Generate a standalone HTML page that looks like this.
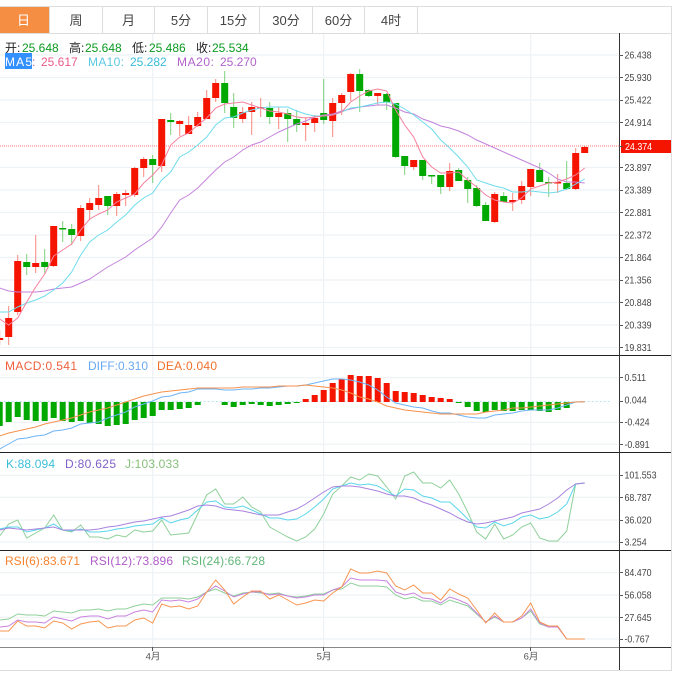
<!DOCTYPE html>
<html><head><meta charset="utf-8">
<style>
html,body{margin:0;padding:0;background:#fff;width:677px;height:681px;overflow:hidden}
svg{display:block;position:absolute;left:0;top:0;filter:blur(.25px)}
text{font-family:"Liberation Sans","Noto Sans CJK SC",sans-serif}
.l polyline,.c path{vector-effect:non-scaling-stroke;fill:none}
.t text{font-size:13px;fill:#444;text-anchor:middle}
.y text{font-size:10.2px;fill:#444}
.g{font-size:12px}
</style></head><body>
<svg width="677" height="681" viewBox="0 0 677 681">
<rect width="677" height="681" fill="#fff"/>
<!-- grid -->
<g stroke="#eef2f6" stroke-width="1.2" fill="none">
<path d="M0 55H619M0 77.5H619M0 100H619M0 122.5H619M0 167.5H619M0 190H619M0 212.5H619M0 235H619M0 257.5H619M0 280H619M0 302.5H619M0 325H619M0 347.5H619"/>
<path d="M0 377.7H619M0 422.3H619M0 444.3H619M0 475.3H619M0 497.3H619M0 520H619M0 542H619M0 572.7H619M0 595H619M0 617.3H619M0 639H619"/>
<path d="M152.7 33V647M323.7 33V647M530.7 33V647"/>
</g>
<!-- tabs -->
<rect x="0" y="7" width="49" height="26" fill="#f58d42"/>
<g stroke="#ddd" stroke-width="1" fill="none">
<path d="M0 6.5H671.5V670.5H0M0 33.5H671.5"/>
<path d="M49.5 7V33M102.5 7V33M154.5 7V33M207.5 7V33M259.5 7V33M312.5 7V33M364.5 7V33M417.5 7V33"/>
</g>
<g class="t">
<text x="23.5" y="25" style="fill:#fff">日</text>
<text x="76" y="25">周</text>
<text x="128.5" y="25">月</text>
<text x="181" y="25">5分</text>
<text x="233.5" y="25">15分</text>
<text x="286" y="25">30分</text>
<text x="338.5" y="25">60分</text>
<text x="391" y="25">4时</text>
</g>
<!-- price dotted line -->
<path d="M0 146H619" stroke="#f77" stroke-width="1" stroke-dasharray="1 1" fill="none"/>
<!-- candles -->
<g class="c" transform="translate(8.7 0) scale(9 1)">
<path stroke="#f51400" stroke-opacity=".5" stroke-width="1" d="M-1 330V345M0 306V345M1 255V315M3 235V273M5 226V267M8 205V241M9 198V220M10 185V210M12 192V216M13 190V206M14 167V197M15 157V177M17 119V172M19 120V136M20 116V134M21 112V127M22 90V119M23 79V102M26 107V123M27 102V135M28 98V117M30 107V129M33 117V141M34 115V132M36 98V137M37 93V115M38 73V101M41 93V105M45 160V170M49 163V191M54 192V223M56 193V211M57 181V204M58 169V196M61 174V193M63 148V190M64 146V153"/>
<path stroke="#00a800" stroke-opacity=".5" stroke-width="1" d="M2 254V275M4 249V273M6 221V242M7 224V245M11 196V215M16 155V183M18 113V135M24 71V113M25 93V128M29 102V124M31 109V142M32 110V132M35 79V124M39 69V112M40 89V97M42 93V110M43 103V158M44 156V175M46 160V180M47 175V184M48 175V194M50 168V181M51 177V203M52 185V207M53 202V221M55 192V202M59 163V182M60 177V197M62 161V190"/>
<path stroke="#f51400" stroke-width="7" d="M-1 338V340M0 318V337M1 261V312M3 263V267M5 226V266M8 208V236M9 203V210M10 198V205M12 194V206M13 193V195M14 168V195M15 159V168M17 119V166M19 121V124M20 125V134M21 117V126M22 98V119M23 83V98M26 112V119M27 107V112M28 107V108.5M30 113V117M33 123V125M34 118V123M36 103V121M37 95V103M38 74V92M41 93V96M45 160V167M49 171V187M54 194V222M56 200V202M57 186V200M58 169V187M61 182V183.5M63 153V189M64 147V153"/>
<path stroke="#00a800" stroke-width="7" d="M2 262V267M4 262V267M6 228V229.5M7 229V235M11 196V206M16 159V165M18 120V122M24 83V103M25 107V118M29 108V117M31 113V119M32 119V125M35 113V120M39 74V91M40 90V96M42 94V102M43 103V157M44 156V166M46 160V176M47 175V176.5M48 175V187M50 170V181M51 180V189M52 188V206M53 205V221M55 196V202M59 170V182M60 182V183.5M62 183V189"/>
</g>
<!-- MACD bars -->
<g class="c" transform="translate(8.7 0) scale(9 1)">
<path stroke="#bfe3ee" stroke-width="1" stroke-dasharray="2 2" d="M-1 401.5H67"/>
<path stroke="#00a800" stroke-width="6" d="M-1 402V426M0 402V422M1 402V417M2 402V420M3 402V421M4 402V421M5 402V418M6 402V421M7 402V422M8 402V421M9 402V423M10 402V424M11 402V426M12 402V425M13 402V424M14 402V420M15 402V418M16 402V416M17 402V410M18 402V410M19 402V409M20 402V408M21 402V405M24 402V405M25 402V407M26 402V405M27 402V404M28 402V405M29 402V406M30 402V405M31 402V404M32 402V403M50 402V403M51 402V407M52 402V411M53 402V412M54 402V410M55 402V411M56 402V411M57 402V410M58 402V410M59 402V411M60 402V412M61 402V410M62 402V408"/>
<path stroke="#f51400" stroke-width="6" d="M33 399V402M34 395V402M35 390V402M36 383V402M37 379V402M38 375V402M39 376V402M40 376V402M41 378V402M42 383V402M43 391V402M44 392V402M45 393V402M46 395V402M47 397V402M48 398V402M49 399V402"/>
</g>
<!-- lines -->
<g class="l" transform="translate(8.7 0) scale(9 1)" stroke-width="1">
<polyline stroke="#c483dc" points="-1,288 0,291 1,292 2,292 3,292 4,291 5,289 6,288 7,287 8,283 9,279 10,273 11,267 12,262 13,257 14,250 15,244 16,238 17,227 18,213 19,200 20,195 21,188 22,179 23,170 24,162 25,157 26,150 27,145 28,142 29,137 30,132 31,128 32,124 33,121 34,117 35,115 36,114 37,111 38,109 39,107 40,106 41,105 42,105 43,108 44,112 45,114 46,119 47,122 48,126 49,128 50,131 51,135 52,140 53,144 54,148 55,152 56,156 57,160 58,164 59,168 60,173 61,179 62,182 63,182 64,183"/>
<polyline stroke="#6fdcec" points="-1,312 0,312 1,307 2,303 3,300 4,296 5,290 6,283 7,272 8,255 9,242 10,235 11,230 12,222 13,215 14,205 15,198 16,193 17,180 18,172 19,157 20,152 21,145 22,137 23,125 24,118 25,117 26,113 27,110 28,108 29,107 30,107 31,107 32,111 33,114 34,116 35,116 36,115 37,112 38,108 39,107 40,105 41,103 42,102 43,104 44,109 45,115 46,122 47,129 48,140 49,148 50,157 51,167 52,180 53,183 54,186 55,188 56,192 57,192 58,191 59,192 60,193 61,192 62,189 63,184 64,179"/>
<polyline stroke="#f5819f" points="-1,319 0,325 1,318 2,302 3,287 4,274 5,256 6,250 7,244 8,230 9,219 10,214 11,210 12,202 13,198 14,194 15,183 16,175 17,165 18,145 19,137 20,133 21,125 22,118 23,108 24,104 25,103 26,102 27,105 28,108 29,111 30,112 31,114 32,117 33,118 34,117 35,116 36,115 37,112 38,102 39,96 40,91 41,89 42,91 43,110 44,125 45,137 46,157 47,167 48,173 49,173 50,172 51,180 52,187 53,195 54,200 55,202 56,203 57,198 58,189 59,186 60,183 61,182 62,179 63,175 64,168"/>
<polyline stroke="#6eb4f5" points="-1,449 0,444 1,439 2,438 3,436 4,435 5,431 6,430 7,428 8,424 9,423 10,422 11,418 12,415 13,412 14,407 15,404 16,401 17,397 18,396 19,393 20,392 21,389 22,389 23,389 24,390 25,390 26,389 27,389 28,388 29,388 30,387 31,386 32,386 33,385 34,383 35,381 36,379 37,379 38,380 39,382 40,385 41,390 42,397 43,403 44,405 45,407 46,408 47,411 48,413 49,413 50,415 51,417 52,418 53,418 54,415 55,414 56,413 57,411 58,410 59,410 60,410 61,408 62,405 63,402 64,401.7"/>
<polyline stroke="#f5914c" points="-1,436 0,433 1,431 2,429 3,427 4,424 5,422 6,420 7,418 8,415 9,412 10,410 11,408 12,405 13,402 14,399 15,396 16,394 17,392 18,391 19,390 20,389 21,388 22,388 23,388 24,388 25,388 26,387 27,387 28,387 29,387 30,386 31,386 32,386 33,385 34,386 35,387 36,388 37,390 38,393 39,397 40,399 41,402 42,406 43,408 44,410 45,411 46,412 47,413 48,414 49,414 50,414 51,414 52,414 53,412 54,411 55,410 56,408 57,408 58,407 59,406 60,405 61,404 62,403 63,402 64,401.7"/>
<polyline stroke="#8fd09a" points="-1,536 0,524 1,520 2,538 3,533 4,528 5,515 6,530 7,532 8,525 9,537 10,537 11,539 12,535 13,537 14,530 15,532 16,531 17,520 18,535 19,534 20,533 21,514 22,495 23,489 24,504 25,504 26,497 27,507 28,512 29,527 30,532 31,537 32,541 33,537 34,529 35,514 36,494 37,486 38,477 39,480 40,474 41,476 42,487 43,499 44,476 45,472 46,483 47,483 48,488 49,480 50,494 51,512 52,532 53,539 54,524 55,539 56,535 57,527 58,523 59,538 60,541 61,541 62,531 63,484 64,483"/>
<polyline stroke="#5ad6ea" points="-1,529 0,527 1,527 2,532 3,530 4,528 5,524 6,530 7,531 8,529 9,532 10,532 11,531 12,529 13,528 14,526 15,525 16,524 17,518 18,523 19,520 20,518 21,510 22,502 23,501 24,507 25,508 26,506 27,510 28,514 29,518 30,518 31,520 32,519 33,514 34,507 35,499 36,489 37,486 38,483 39,485 40,484 41,486 42,491 43,496 44,489 45,490 46,496 47,498 48,502 49,502 50,510 51,519 52,527 53,528 54,522 55,526 56,523 57,517 58,515 59,519 60,517 61,512 62,504 63,484 64,483"/>
<polyline stroke="#a983de" points="-1,530 0,528 1,529 2,530 3,529 4,528 5,527 6,530 7,530 8,530 9,530 10,529 11,527 12,526 13,524 14,522 15,521 16,519 17,517 18,516 19,513 20,510 21,506 22,505 23,506 24,509 25,510 26,511 27,513 28,515 29,515 30,515 31,512 32,509 33,504 34,498 35,492 36,487 37,486 38,486 39,487 40,489 41,491 42,494 43,496 44,496 45,498 46,502 47,505 48,509 49,513 50,518 51,522 52,524 53,523 54,521 55,519 56,517 57,513 58,511 59,509 60,504 61,498 62,490 63,484 64,483"/>
<polyline stroke="#8fd09a" points="-1,620 0,619 1,614 2,615 3,615 4,616 5,611 6,612 7,613 8,610 9,610 10,609 11,611 12,609 13,609 14,606 15,604 16,605 17,598 18,598 19,598 20,599 21,597 22,592 23,589 24,593 25,596 26,593 27,592 28,593 29,594 30,593 31,596 32,597 33,596 34,594 35,594 36,590 37,589 38,583 39,586 40,586 41,586 42,587 43,595 44,599 45,597 46,601 47,601 48,605 49,600 50,603 51,606 52,614 53,622 54,617 55,622 56,622 57,618 58,611 59,624 60,627 61,627 62,639 63,639 64,639"/>
<polyline stroke="#c883de" points="-1,627 0,626 1,620 2,622 3,622 4,623 5,617 6,619 7,621 8,617 9,616 10,616 11,619 12,616 13,616 14,612 15,610 16,612 17,600 18,601 19,600 20,602 21,599 22,592 23,586 24,591 25,597 26,594 27,592 28,592 29,595 30,594 31,596 32,598 33,597 34,595 35,595 36,590 37,587 38,578 39,580 40,580 41,580 42,581 43,592 44,595 45,593 46,598 47,599 48,603 49,597 50,600 51,604 52,613 53,622 54,616 55,622 56,622 57,618 58,609 59,623 60,627 61,627 62,639 63,639 64,639"/>
<polyline stroke="#f79650" points="-1,631 0,631 1,621 2,626 3,626 4,628 5,621 6,623 7,629 8,624 9,622 10,621 11,628 12,626 13,626 14,620 15,618 16,623 17,604 18,607 19,606 20,609 21,606 22,592 23,580 24,590 25,604 26,597 27,591 28,591 29,599 30,595 31,600 32,605 33,603 34,600 35,601 36,593 37,587 38,569 39,573 40,573 41,571 42,573 43,586 44,590 45,585 46,593 47,593 48,600 49,589 50,594 51,598 52,610 53,623 54,613 55,622 56,622 57,616 58,603 59,622 60,626 61,626 62,639 63,639 64,639"/>
</g>
<!-- axes -->
<g fill="none">
<path d="M0 355.5H671M0 452.5H671M0 550.5H671" stroke="#222" stroke-width="1"/>
<path d="M0 647.5H619" stroke="#888" stroke-width="1"/>
<path d="M619 647.5H671" stroke="#333" stroke-width="1"/>
<path d="M619.5 33V670" stroke="#333" stroke-width="1"/>
<path stroke="#555" stroke-width="1" d="M619 55.5H623M619 77.5H623M619 100.5H623M619 122.5H623M619 167.5H623M619 190.5H623M619 212.5H623M619 235.5H623M619 257.5H623M619 280.5H623M619 302.5H623M619 325.5H623M619 347.5H623M619 377.5H623M619 401.5H623M619 422.5H623M619 444.5H623M619 475.5H623M619 497.5H623M619 520.5H623M619 542.5H623M619 572.5H623M619 595.5H623M619 617.5H623M619 639.5H623M152.5 647V651M323.5 647V651M530.5 647V651"/>
</g>
<rect x="621" y="140" width="50" height="13" fill="#f51400"/>
<path d="M619 146.5H623" stroke="#555"/>
<g class="y" transform="scale(.87 1)">
<text x="718.4" y="150" style="fill:#fff">24.374</text>
<text x="717.8" y="58.5">26.438</text><text x="717.8" y="81">25.930</text><text x="717.8" y="103.5">25.422</text><text x="717.8" y="126">24.914</text>
<text x="717.8" y="171">23.897</text><text x="717.8" y="193.5">23.389</text><text x="717.8" y="216">22.881</text><text x="717.8" y="238.5">22.372</text><text x="717.8" y="261">21.864</text><text x="717.8" y="283.5">21.356</text><text x="717.8" y="306">20.848</text><text x="717.8" y="328.5">20.339</text><text x="717.8" y="351">19.831</text>
<text x="717.8" y="381">0.511</text><text x="717.8" y="403.5">0.044</text><text x="717.8" y="425.5">-0.424</text><text x="717.8" y="448">-0.891</text>
<text x="717.8" y="478.5">101.553</text><text x="717.8" y="501">68.787</text><text x="717.8" y="523.5">36.020</text><text x="717.8" y="545.5">3.254</text>
<text x="717.8" y="576">84.470</text><text x="717.8" y="598.5">56.058</text><text x="717.8" y="621">27.645</text><text x="717.8" y="642.5">-0.767</text>
</g>
<g font-size="9.5" fill="#555" text-anchor="middle">
<text x="153" y="659.5">4月</text><text x="324" y="659.5">5月</text><text x="531" y="659.5">6月</text>
</g>
<!-- legends -->
<g class="g">
<text x="5" y="52" fill="#222">开:</text><text x="22" y="52" fill="#0a9a20">25.648</text>
<text x="69" y="52" fill="#222">高:</text><text x="85" y="52" fill="#0a9a20">25.648</text>
<text x="132" y="52" fill="#222">低:</text><text x="149" y="52" fill="#0a9a20">25.486</text>
<text x="196" y="52" fill="#222">收:</text><text x="212" y="52" fill="#0a9a20">25.534</text>
<rect x="5" y="53" width="27" height="16" fill="#3390ff"/>
<text x="5" y="66" fill="#fff" textLength="27">MA5</text>
<text x="32" y="66" fill="#ea5a8c">:</text><text x="41" y="66" fill="#ea5a8c">25.617</text>
<text x="88" y="66" fill="#5cc8e0" textLength="36">MA10:</text><text x="130" y="66" fill="#3abcd8">25.282</text>
<text x="177" y="66" fill="#b262cc" textLength="37">MA20:</text><text x="220" y="66" fill="#b262cc">25.270</text>
<text x="5" y="370" fill="#f0603c" textLength="72">MACD:0.541</text>
<text x="88" y="370" fill="#6aa9f2" textLength="60">DIFF:0.310</text>
<text x="157" y="370" fill="#f0702c" textLength="60">DEA:0.040</text>
<text x="6" y="468" fill="#3cbfd8" textLength="49">K:88.094</text>
<text x="65" y="468" fill="#8060c8" textLength="51">D:80.625</text>
<text x="125" y="468" fill="#86c07a" textLength="54">J:103.033</text>
<text x="5" y="565" fill="#f5822e" textLength="75">RSI(6):83.671</text>
<text x="90" y="565" fill="#b05cc8" textLength="83">RSI(12):73.896</text>
<text x="182" y="565" fill="#62b87a" textLength="83">RSI(24):66.728</text>
</g>
</svg>
</body></html>
